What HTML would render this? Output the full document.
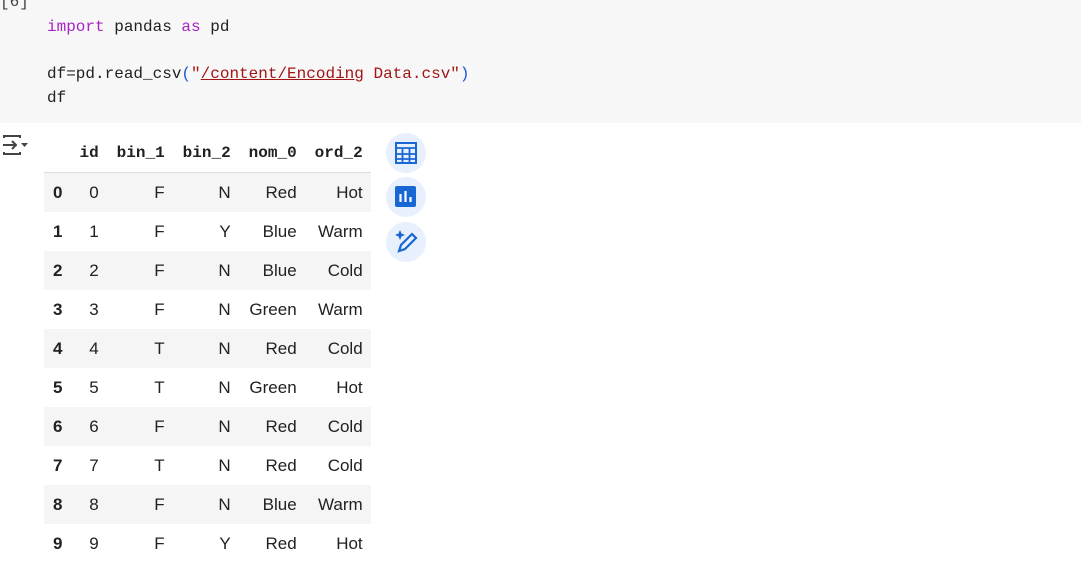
<!DOCTYPE html>
<html><head><style>
body{margin:0;width:1081px;height:565px;background:#fff;position:relative;overflow:hidden;font-family:"Liberation Sans",sans-serif;}
.code{position:absolute;left:0;top:0;width:1081px;height:123px;background:#f7f7f7;}
.mono{font-family:"Liberation Mono",monospace;font-size:16px;color:#212121;}
.ln{position:absolute;left:47px;white-space:pre;}
.kw{color:#a626c4}.pn{color:#1a56d6}.st{color:#a31515}
table{position:absolute;left:44px;top:133px;border-collapse:collapse;font-size:17px;color:#212121;}
th{font-family:"Liberation Mono",monospace;font-weight:bold;font-size:16px;height:39px;text-align:right;padding:0 8px;}
td{height:39px;text-align:right;padding:0 8px;}
tbody tr:nth-child(odd){background:#f5f5f5}
thead tr{border-bottom:1px solid #ddd}
td.i{font-weight:bold;text-align:left;padding-left:9px;padding-right:9px}
.c{position:absolute;left:386px;width:40px;height:40px;border-radius:50%;background:#e8f0fe;}
</style></head><body>
<div class="code">
<div class="mono" style="position:absolute;left:0;top:-7px;color:#444">[6]</div>
<div class="mono ln" style="top:18px"><span class="kw">import</span> pandas <span class="kw">as</span> pd</div>
<div class="mono ln" style="top:65px">df=pd.read_csv<span class="pn">(</span><span class="st">"<span style="text-decoration:underline">/content/Encoding</span> Data.csv"</span><span class="pn">)</span></div>
<div class="mono ln" style="top:89px">df</div>
</div>
<svg style="position:absolute;left:2px;top:134px" width="26" height="22" viewBox="0 0 26 22"><path d="M2 4V2h16v2M2 18v2h16v-2M1 11h13M10 7l4 4-4 4" stroke="#444" stroke-width="2" fill="none"/><path d="M19 9h7l-3.5 4z" fill="#444"/></svg>
<table>
<thead><tr><th style="width:10px"></th><th style="width:14px">id</th><th style="width:50px">bin_1</th><th style="width:50px">bin_2</th><th style="width:50px">nom_0</th><th style="width:50px">ord_2</th></tr></thead>
<tbody>
<tr><td class="i">0</td><td>0</td><td>F</td><td>N</td><td>Red</td><td>Hot</td></tr>
<tr><td class="i">1</td><td>1</td><td>F</td><td>Y</td><td>Blue</td><td>Warm</td></tr>
<tr><td class="i">2</td><td>2</td><td>F</td><td>N</td><td>Blue</td><td>Cold</td></tr>
<tr><td class="i">3</td><td>3</td><td>F</td><td>N</td><td>Green</td><td>Warm</td></tr>
<tr><td class="i">4</td><td>4</td><td>T</td><td>N</td><td>Red</td><td>Cold</td></tr>
<tr><td class="i">5</td><td>5</td><td>T</td><td>N</td><td>Green</td><td>Hot</td></tr>
<tr><td class="i">6</td><td>6</td><td>F</td><td>N</td><td>Red</td><td>Cold</td></tr>
<tr><td class="i">7</td><td>7</td><td>T</td><td>N</td><td>Red</td><td>Cold</td></tr>
<tr><td class="i">8</td><td>8</td><td>F</td><td>N</td><td>Blue</td><td>Warm</td></tr>
<tr><td class="i">9</td><td>9</td><td>F</td><td>Y</td><td>Red</td><td>Hot</td></tr>
</tbody></table>
<div class="c" style="top:133px"><svg width="40" height="40"><rect x="10" y="10" width="20" height="20" fill="none" stroke="#1967d2" stroke-width="2"/><path d="M10 15h20M10 21h20M10 26h20M16.5 15v15M23.5 15v15" stroke="#1967d2" stroke-width="1.8"/></svg></div>
<div class="c" style="top:177px"><svg width="40" height="40"><rect x="9" y="9" width="21" height="21" rx="2" fill="#1967d2"/><path d="M14.5 17v8M19.5 14v11M24.5 20v5" stroke="#fff" stroke-width="2.2"/></svg></div>
<div class="c" style="top:222px"><svg width="40" height="40"><path d="M13 29l2-6 11-11 4 4-11 11z" fill="none" stroke="#1967d2" stroke-width="2.2"/><path d="M14 8l1.5 3.5L19 13l-3.5 1.5L14 18l-1.5-3.5L9 13l3.5-1.5z" fill="#1967d2"/></svg></div>
</body></html>
